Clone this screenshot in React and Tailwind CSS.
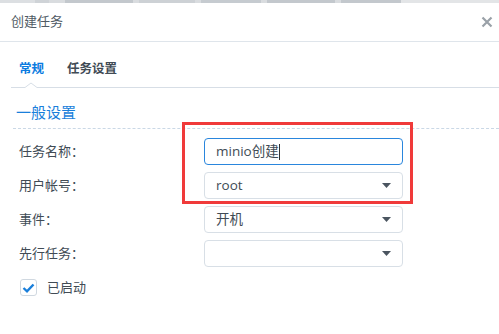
import React from 'react';

const Caret = () => (
  <svg width="9" height="5" viewBox="0 0 9 5" className="shrink-0">
    <path d="M0 0 H9 L4.5 5 Z" fill="#4b5560" />
  </svg>
);

const Field = ({ label, children }) => (
  <div className="flex items-center h-[27px]">
    <div className="w-[204px] pl-[19px] text-[13px] text-[#414b55]">{label}</div>
    {children}
  </div>
);

const Select = ({ value }) => (
  <div className="w-[199px] h-[27px] rounded-[4px] border border-[#d8dfe6] bg-white flex items-center justify-between pl-[11px] pr-[11px]">
    <span className="text-[13.5px] text-[#414b55]">{value}</span>
    <Caret />
  </div>
);

export default function App() {
  return (
    <div
      className="w-[499px] h-[334px] bg-white relative overflow-hidden"
      style={{ fontFamily: '"Open Sans", "Noto Sans CJK SC", sans-serif' }}
    >
      {/* page behind the dialog */}
      <div className="h-[3px] flex bg-[#d9dcdf]">
        <div className="w-[35px] bg-[#dcdfe2]" />
        <div className="w-[14px] bg-[#cfd3d7]" />
        <div className="w-[16px]" />
        <div className="w-[68px] bg-[#c3c8cd]" />
        <div className="w-[6px]" />
        <div className="w-[56px] bg-[#cdd1d5]" />
        <div className="w-[6px]" />
        <div className="w-[60px] bg-[#c6cbd0]" />
        <div className="w-[6px]" />
        <div className="w-[68px] bg-[#c3c8cd]" />
        <div className="w-[6px]" />
        <div className="w-[60px] bg-[#c3c8cd]" />
        <div className="flex-1 bg-[#e3e5e7]" />
      </div>

      {/* header */}
      <div className="h-[39px] flex items-center justify-between pl-[11px] pr-[6px] border-b border-[#dfe5eb]">
        <span className="text-[13px] text-[#505a64]">创建任务</span>
        <svg width="12" height="12" viewBox="0 0 12 12">
          <path d="M1.5 1.5 L10.5 10.5 M10.5 1.5 L1.5 10.5" stroke="#9aa1a8" strokeWidth="2.2" />
        </svg>
      </div>

      {/* tabs */}
      <div className="ml-[11px] h-[46px] border-b border-[#d7dee6] relative flex items-center pl-[8px] gap-[23px] pt-[10px]">
        <span className="text-[12.5px] font-bold text-[#0a7be0]">常规</span>
        <span className="text-[12.5px] font-bold text-[#414b55]">任务设置</span>
        <div className="absolute left-[14px] bottom-[-1px] w-[12px] h-[6px] bg-white overflow-hidden">
          <svg width="12" height="6" viewBox="0 0 12 6" className="block">
            <path d="M0 5.5 L6 1 L12 5.5" fill="none" stroke="#d7dee6" strokeWidth="1" />
          </svg>
        </div>
      </div>

      {/* section title */}
      <div className="ml-[13px] mt-[14px] h-[27px] border-b border-dashed border-[#cad8e6] pl-[3px] text-[15px] text-[#1a7fdb] leading-[20px]">
        一般设置
      </div>

      {/* form */}
      <div className="mt-[9px] flex flex-col gap-[7px]">
        <Field label="任务名称：">
          <div className="w-[199px] h-[27px] rounded-[4px] border border-[#2a86dd] bg-white flex items-center pl-[11px]">
            <span className="text-[13.5px] text-[#414b55]">minio创建</span>
            <span className="w-px h-[16px] bg-[#333]" />
          </div>
        </Field>
        <Field label="用户帐号：">
          <Select value="root" />
        </Field>
        <Field label="事件：">
          <Select value="开机" />
        </Field>
        <Field label="先行任务：">
          <Select value="" />
        </Field>
        <div className="flex items-center h-[27px] pl-[20px] gap-[10px]">
          <div className="w-[17px] h-[17px] rounded-[3px] border border-[#d0d8e0] flex items-center justify-center">
            <svg width="13" height="10" viewBox="0 0 13 10">
              <path d="M1.5 5 L5 8.3 L11.5 1.5" fill="none" stroke="#1a7fdb" strokeWidth="2.4" />
            </svg>
          </div>
          <span className="text-[13px] text-[#414b55]">已启动</span>
        </div>
      </div>

      {/* annotation box */}
      <div className="absolute left-[182px] top-[122px] w-[231px] h-[82px] border-[3px] border-[#f03a3a]" />
    </div>
  );
}
